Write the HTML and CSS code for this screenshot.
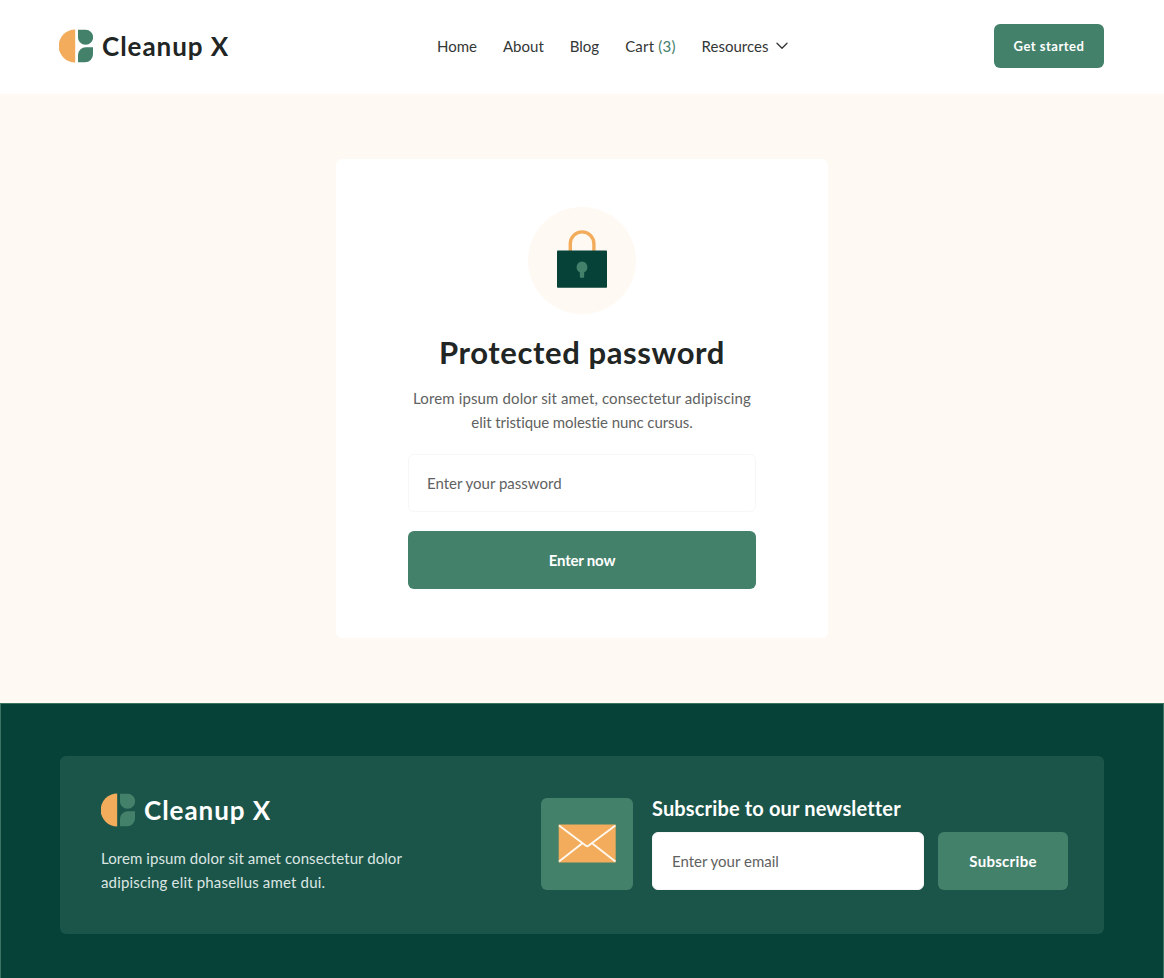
FILE: index.html
```html
<!DOCTYPE html>
<html lang="en">
<head>
  <meta charset="utf-8" />
  <meta name="viewport" content="width=device-width, initial-scale=1" />
  <title>Protected password – Cleanup X</title>
  <link rel="stylesheet" href="styles.css">
</head>
<body>
  <header class="header">
    <a href="#" class="logo">
      <svg class="logo-mark" width="34" height="34" viewBox="0 0 34 34">
        <path fill="#f2ac5b" d="M16.2 .5v33A16.5 16.5 0 0 1 16.2 .5z"/>
        <path fill="#44816b" d="M19 .8h7.700a7.400 7.400 0 0 1 0 14.900C22.500 15.700 19 12.500 19 8.500z"/>
        <path fill="#44816b" d="M19 33.300V26a7.800 7.800 0 0 1 7.800-7.800H34V25.500a7.800 7.800 0 0 1-7.800 7.800z"/>
      </svg>
      <span>Cleanup X</span>
    </a>
    <nav class="nav">
      <a href="#">Home</a>
      <a href="#">About</a>
      <a href="#">Blog</a>
      <a href="#" class="cart">Cart <span class="count">(3)</span></a>
      <a href="#" class="dropdown">Resources
        <svg width="12" height="8" viewBox="0 0 12 8" fill="none" stroke="#333" stroke-width="1.300" stroke-linecap="round" stroke-linejoin="round"><path d="M1 1.200l5 5 5-5"/></svg>
      </a>
    </nav>
    <a href="#" class="btn btn-small">Get started</a>
  </header>

  <main class="main">
    <form class="card">
      <div class="lock">
        <svg width="50" height="58" viewBox="0 0 50 58">
          <path d="M13.300 22V13.700a11.800 11.800 0 0 1 23.600 0V22" fill="none" stroke="#f2ac5b" stroke-width="3.400"/>
          <rect y="20.500" width="50" height="37.300" rx=".8" fill="#064238"/>
          <path fill="#44816b" d="M25 31.500a5.700 5.700 0 0 1 2.200 10.800V46.700a1 1 0 0 1-1 1h-2.400a1 1 0 0 1-1-1V42.300A5.700 5.700 0 0 1 25 31.500z"/>
        </svg>
      </div>
      <h1>Protected password</h1>
      <p>Lorem ipsum dolor sit amet, consectetur adipiscing<br><span class="line-two">elit tristique molestie nunc cursus.</span></p>
      <input class="input" type="password" placeholder="Enter your password">
      <button class="btn btn-block" type="button">Enter now</button>
    </form>
  </main>

  <footer class="footer">
    <div class="panel">
      <div class="about">
        <a href="#" class="logo">
          <svg class="logo-mark" width="34" height="34" viewBox="0 0 34 34">
            <path fill="#f2ac5b" d="M16.2 .5v33A16.5 16.5 0 0 1 16.2 .5z"/>
            <path fill="#44816b" d="M19 .8h7.700a7.400 7.400 0 0 1 0 14.900C22.500 15.700 19 12.500 19 8.500z"/>
            <path fill="#44816b" d="M19 33.300V26a7.800 7.800 0 0 1 7.800-7.800H34V25.500a7.800 7.800 0 0 1-7.800 7.800z"/>
          </svg>
          <span>Cleanup X</span>
        </a>
        <p>Lorem ipsum dolor sit amet consectetur dolor<br><span class="line-two">adipiscing elit phasellus amet dui.</span></p>
      </div>
      <div class="mail">
        <svg width="58" height="39" viewBox="0 0 58 39" fill="none" stroke="#fff8ef" stroke-width="1.900">
          <rect x=".7" y=".5" width="57" height="38" fill="#f2ac5b" stroke="none"/>
          <path d="M1 1.500L28 21.700q1.200 1 2.400 0L57.400 1.500M1 37.500l24-18.700M57.400 37.500L33.400 18.800"/>
        </svg>
      </div>
      <form class="newsletter">
        <h2>Subscribe to our newsletter</h2>
        <div class="row">
          <input class="input" type="email" placeholder="Enter your email">
          <button class="btn btn-subscribe" type="button">Subscribe</button>
        </div>
      </form>
    </div>
  </footer>
</body>
</html>
```
FILE: styles.css
```css
* {
  box-sizing: border-box;
}
body {
  margin: 0;
  font-family: Lato, "Open Sans", sans-serif;
  font-size: 15px;
  font-variant-ligatures: none;
  color: #212524;
  background: #fff;
}
a {
  color: inherit;
  text-decoration: none;
}
h1, h2, p {
  margin: 0;
}
.header {
  height: 94px;
  padding: 24px 60px 26px 59px;
  display: grid;
  grid-template-columns: 378px 1fr auto;
  align-items: center;
}
.logo {
  display: flex;
  align-items: center;
  gap: 9px;
  font-size: 26px;
  line-height: 34px;
  font-weight: 700;
  letter-spacing: 0.95px;
}
.logo-mark {
  flex: none;
}
.nav {
  display: flex;
  gap: 26px;
  margin-top: -1px;
  white-space: nowrap;
  color: #333736;
}
.cart {
  letter-spacing: 0.2px;
}
.count {
  color: #44816b;
}
.dropdown {
  display: flex;
  align-items: center;
  gap: 8px;
}
.btn {
  display: flex;
  align-items: center;
  justify-content: center;
  border: 0;
  border-radius: 6px;
  background: #44816b;
  color: #fff;
  font-family: inherit;
  font-size: 15px;
  font-weight: 700;
  cursor: pointer;
}
.btn-small {
  width: 110px;
  height: 44px;
  padding-bottom: 1px;
  font-size: 13px;
  letter-spacing: 0.5px;
}
.main {
  height: 609px;
  padding-top: 65px;
  background: #fff9f3;
}
.card {
  width: 492px;
  height: 479px;
  margin: 0 auto;
  padding: 48px 72px;
  border-radius: 6px;
  background: #fff;
  text-align: center;
}
.lock {
  display: flex;
  align-items: center;
  justify-content: center;
  width: 108px;
  height: 107px;
  margin: 0 auto;
  padding-bottom: 3px;
  border-radius: 50%;
  background: #fff9f3;
}
h1 {
  margin-top: 17px;
  font-size: 31px;
  line-height: 42px;
  letter-spacing: 0.6px;
}
.card p {
  margin-top: 13px;
  line-height: 24px;
  letter-spacing: 0.12px;
  color: #5f6261;
  white-space: nowrap;
}
.card .line-two {
  letter-spacing: -0.08px;
}
.input {
  display: block;
  height: 58px;
  padding: 0 19px 0 18px;
  border: 1px solid #f7f7f7;
  border-radius: 6px;
  background: #fff;
  font-family: inherit;
  font-size: 15px;
}
.input::placeholder {
  color: #5f6261;
  opacity: 1;
}
.card .input {
  width: 100%;
  margin-top: 20px;
}
.btn-block {
  width: 100%;
  height: 58px;
  margin-top: 19px;
  letter-spacing: -0.2px;
}
.footer {
  height: 275px;
  padding: 52px 59px 0;
  border: 1px solid #3c7463;
  border-bottom: 0;
  background: #064238;
}
.panel {
  display: flex;
  height: 178px;
  padding: 37px 36px 0 41px;
  border-radius: 6px;
  background: #1b5549;
  color: #fff;
}
.about {
  width: 440px;
}
.about p {
  margin-top: 19px;
  line-height: 24px;
  letter-spacing: 0.07px;
  color: #dbe6e3;
}
.about .line-two {
  letter-spacing: 0.17px;
}
.mail {
  display: flex;
  align-items: center;
  justify-content: center;
  width: 92px;
  height: 92px;
  margin: 5px 19px 0 1px;
  padding-bottom: 2px;
  border-radius: 6px;
  background: #44816b;
}
h2 {
  font-size: 20px;
  line-height: 30px;
  letter-spacing: 0.15px;
}
.row {
  display: flex;
  gap: 14px;
  margin-top: 9px;
}
.row .input {
  width: 272px;
  padding-left: 19px;
}
.btn-subscribe {
  width: 130px;
  height: 58px;
  letter-spacing: 0.3px;
}
```
